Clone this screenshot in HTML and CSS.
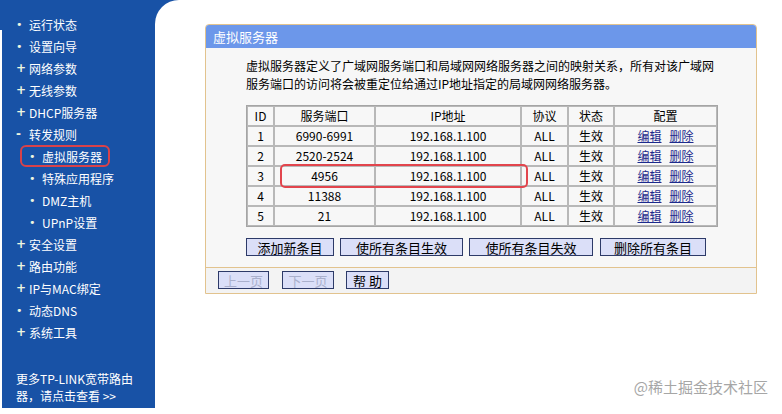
FILE: index.html
```html
<!DOCTYPE html>
<html lang="zh-CN">
<head>
<meta charset="utf-8">
<title>虚拟服务器</title>
<link rel="stylesheet" href="styles.css">
</head>
<body>
<div class="page">
  <nav class="side">
    <ul class="menu">
      <li class="item"><span class="mk">•</span>运行状态</li>
      <li class="item"><span class="mk">•</span>设置向导</li>
      <li class="item"><span class="mk plus">+</span>网络参数</li>
      <li class="item"><span class="mk plus">+</span>无线参数</li>
      <li class="item"><span class="mk plus">+</span>DHCP服务器</li>
      <li class="item"><span class="mk plus">-</span>转发规则</li>
      <li class="item sub hl"><span class="mk">•</span>虚拟服务器</li>
      <li class="item sub"><span class="mk">•</span>特殊应用程序</li>
      <li class="item sub"><span class="mk">•</span>DMZ主机</li>
      <li class="item sub"><span class="mk">•</span>UPnP设置</li>
      <li class="item"><span class="mk plus">+</span>安全设置</li>
      <li class="item"><span class="mk plus">+</span>路由功能</li>
      <li class="item"><span class="mk plus">+</span>IP与MAC绑定</li>
      <li class="item"><span class="mk">•</span>动态DNS</li>
      <li class="item"><span class="mk plus">+</span>系统工具</li>
    </ul>
    <div class="more">更多TP-LINK宽带路由<br>器，请点击查看 &gt;&gt;</div>
  </nav>
  <main class="main">
    <section class="panel">
      <div class="ptitle">虚拟服务器</div>
      <div class="pbody">
        <p class="desc">虚拟服务器定义了广域网服务端口和局域网网络服务器之间的映射关系，所有对该广域网<br>服务端口的访问将会被重定位给通过IP地址指定的局域网网络服务器。</p>
        <table class="grid">
          <colgroup>
            <col class="c-id"><col class="c-port"><col class="c-ip"><col class="c-proto"><col class="c-state"><col class="c-cfg">
          </colgroup>
          <tr><td>ID</td><td>服务端口</td><td>IP地址</td><td>协议</td><td>状态</td><td>配置</td></tr>
          <tr><td>1</td><td>6990-6991</td><td>192.168.1.100</td><td>ALL</td><td>生效</td><td><a class="lk">编辑</a><a class="lk">删除</a></td></tr>
          <tr><td>2</td><td>2520-2524</td><td>192.168.1.100</td><td>ALL</td><td>生效</td><td><a class="lk">编辑</a><a class="lk">删除</a></td></tr>
          <tr><td>3</td><td class="rel">4956<span class="mark"></span></td><td>192.168.1.100</td><td>ALL</td><td>生效</td><td><a class="lk">编辑</a><a class="lk">删除</a></td></tr>
          <tr><td>4</td><td>11388</td><td>192.168.1.100</td><td>ALL</td><td>生效</td><td><a class="lk">编辑</a><a class="lk">删除</a></td></tr>
          <tr><td>5</td><td>21</td><td>192.168.1.100</td><td>ALL</td><td>生效</td><td><a class="lk">编辑</a><a class="lk">删除</a></td></tr>
        </table>
        <div class="btns">
          <button class="btn b1">添加新条目</button>
          <button class="btn b2">使所有条目生效</button>
          <button class="btn b3">使所有条目失效</button>
          <button class="btn b4">删除所有条目</button>
        </div>
      </div>
      <div class="pfoot">
        <button class="btn fb prev dis">上一页</button>
        <button class="btn fb next dis">下一页</button>
        <button class="btn fb help">帮 助</button>
      </div>
    </section>
  </main>
  <div class="wm">@稀土掘金技术社区</div>
</div>
</body>
</html>
```

FILE: styles.css
```css
* { box-sizing: border-box; }
html, body { margin: 0; padding: 0; background: #fff; }
body {
  font-family: "Noto Sans CJK SC", "Noto Sans", sans-serif;
  font-size: 12px;
  color: #000;
}
.page {
  position: relative;
  display: flex;
  height: 408px;
  padding-left: 2px;
  background: linear-gradient(#1852a6, #1852a6) 0 0 / 190px 30px no-repeat, #fff;
}
.side {
  width: 153px;
  flex: none;
  background: #1852a6;
  color: #fff;
  display: flex;
  flex-direction: column;
  padding: 13px 0 4px;
}
.menu { list-style: none; margin: 0; padding: 0; }
.item {
  display: flex;
  align-items: center;
  height: 22px;
  padding-left: 14px;
  font-size: 12px;
  white-space: nowrap;
}
.item.sub { padding-left: 27px; }
.item.hl {
  margin-left: 18px;
  width: 90px;
  padding-left: 7px;
  border: 2px solid #d9424a;
  border-radius: 6px;
}
.mk {
  display: inline-block;
  width: 13px;
  font-family: "DejaVu Sans", sans-serif;
  font-size: 11px;
  color: #eef6e0;
}
.mk.plus { font-weight: bold; font-size: 12px; }
.more {
  margin-top: auto;
  padding-left: 14px;
  line-height: 17px;
  font-size: 12px;
}
.main {
  flex: 1;
  background: #fff;
  border-top-left-radius: 24px;
}
.panel {
  margin: 24px 0 0 50px;
  width: 552px;
  border: 1px solid #e2c38e;
  border-radius: 4px 4px 0 0;
  overflow: hidden;
}
.ptitle {
  height: 23px;
  line-height: 23px;
  background: #6c97ea;
  color: #fff;
  font-size: 13px;
  padding-left: 7px;
}
.pbody {
  background: #f7f7f7;
  padding: 9px 0 11px 40px;
}
.desc {
  margin: 0;
  line-height: 18px;
  white-space: nowrap;
  font-size: 12px;
}
.grid {
  margin-top: 12px;
  border-collapse: separate;
  border-spacing: 0;
  border: 1px solid #a5a5a5;
  table-layout: fixed;
  width: 470px;
}
.grid td {
  height: 20px;
  padding: 0;
  border: 1px solid #b8b8b8;
  text-align: center;
  font-size: 12px;
  line-height: 16px;
}
.c-id { width: 27px; }
.c-port { width: 101px; }
.c-ip { width: 146px; }
.c-proto { width: 47px; }
.c-state { width: 46px; }
.c-cfg { width: 103px; }
.rel { position: relative; }
.mark {
  position: absolute;
  left: 5px;
  top: -3px;
  width: 248px;
  height: 24px;
  border: 2px solid #e2454d;
  border-radius: 5px;
}
.lk {
  color: #1c2a8c;
  text-decoration: underline;
  margin: 0 4px;
}
.btns {
  display: flex;
  margin-top: 11px;
}
.btn {
  height: 18px;
  padding: 0;
  background: #dbdff8;
  border: 1px solid #2d3a68;
  border-radius: 0;
  font-family: "Noto Sans CJK SC", "Noto Sans", sans-serif;
  font-size: 13px;
  line-height: 15px;
  color: #000;
}
.b1 { width: 88px; }
.b2 { width: 123px; margin-left: 6px; }
.b3 { width: 124px; margin-left: 6px; }
.b4 { width: 106px; margin-left: 7px; }
.pfoot {
  display: flex;
  border-top: 1px solid #e2c38e;
  background: #f3f3f3;
  padding: 3px 12px 4px;
}
.fb { height: 18px; }
.prev { width: 51px; }
.next { width: 52px; margin-left: 13px; }
.help { width: 43px; margin-left: 12px; }
.dis { color: #aab0cc; }
.wm {
  position: absolute;
  right: 14px;
  bottom: 11px;
  font-size: 15px;
  color: #a6a6a6;
}
```
